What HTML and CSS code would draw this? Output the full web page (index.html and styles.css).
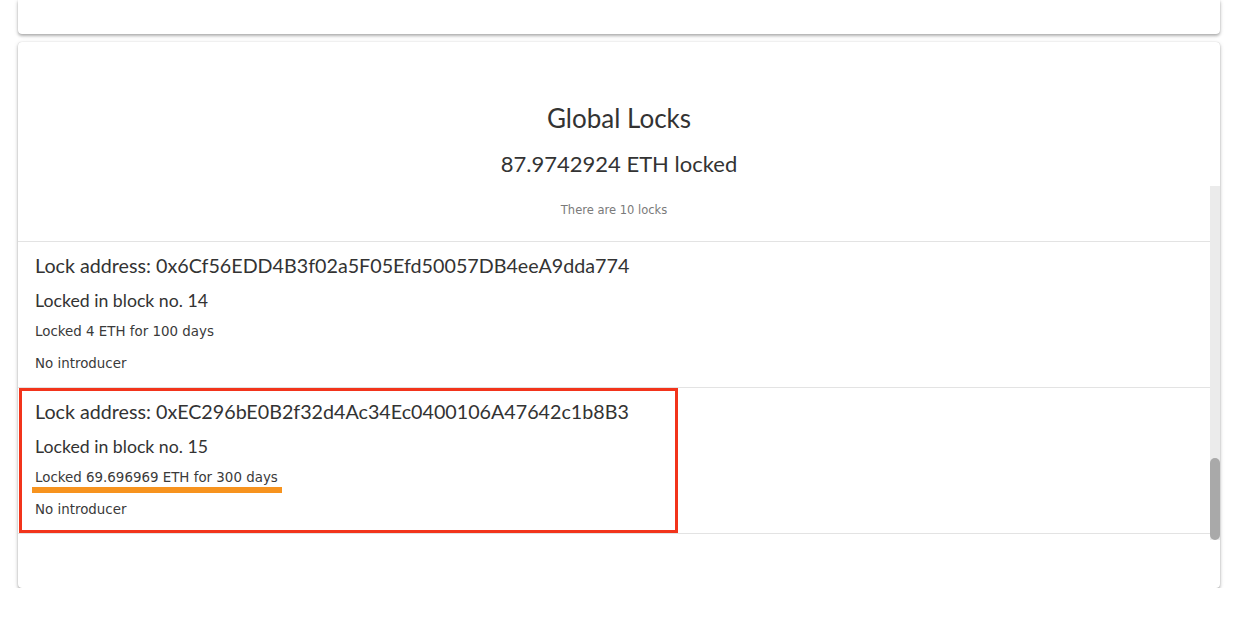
FILE: index.html
```html
<!DOCTYPE html>
<html>
<head>
<meta charset="utf-8">
<title>Global Locks</title>
<link rel="stylesheet" href="styles.css">
</head>
<body>
  <div class="page">
    <div class="card card-top"></div>
    <div class="card card-main">
      <header class="header">
        <h2 class="title">Global Locks</h2>
        <p class="total">87.9742924 ETH locked</p>
      </header>
      <div class="scroll-area">
        <div class="scroll-content">
          <p class="count">There are 10 locks</p>
          <ul class="locks">
            <li class="lock">
              <p class="lock-address">Lock address: 0x6Cf56EDD4B3f02a5F05Efd50057DB4eeA9dda774</p>
              <p class="lock-block">Locked in block no. 14</p>
              <p class="lock-amount">Locked 4 ETH for 100 days</p>
              <p class="lock-intro">No introducer</p>
            </li>
            <li class="lock lock-highlight">
              <p class="lock-address">Lock address: 0xEC296bE0B2f32d4Ac34Ec0400106A47642c1b8B3</p>
              <p class="lock-block">Locked in block no. 15</p>
              <p class="lock-amount">Locked 69.696969 ETH for 300 days</p>
              <p class="lock-intro">No introducer</p>
              <span class="mark-box"></span>
              <span class="mark-underline"></span>
            </li>
          </ul>
        </div>
        <div class="scrollbar"><div class="thumb"></div></div>
      </div>
    </div>
  </div>
</body>
</html>
```

FILE: styles.css
```css
html, body {
  margin: 0;
  padding: 0;
  background: #ffffff;
}

.page {
  padding: 0 22px 0 18px;
  display: flex;
  flex-direction: column;
  gap: 8px;
}

.card {
  background: #ffffff;
  border-radius: 4px;
  box-shadow: 0 2px 3px rgba(0,0,0,0.24), 0 1px 5px rgba(0,0,0,0.12), 0 0 1px rgba(0,0,0,0.2);
}

.card-top {
  height: 34px;
  border-radius: 0 0 4px 4px;
}

.card-main {
  height: 546px;
  box-sizing: border-box;
  padding-top: 60px;
  display: flex;
  flex-direction: column;
}

.header {
  text-align: center;
  font-family: Lato, "Open Sans", sans-serif;
  color: #333333;
}

.title {
  margin: 0;
  font-size: 26px;
  line-height: 32px;
  font-weight: 400;
}

.total {
  margin: 14px 0 0;
  font-size: 22px;
  line-height: 32px;
}

.scroll-area {
  margin-top: 6px;
  height: 354px;
  display: flex;
}

.scroll-content {
  flex: 1;
  padding-top: 16px;
}

.count {
  margin: 0 0 23px;
  text-align: center;
  font-family: "DejaVu Sans", Verdana, sans-serif;
  font-size: 11.5px;
  line-height: 16px;
  color: #7a7a7a;
}

.locks {
  list-style: none;
  margin: 0;
  padding: 0;
  border-bottom: 1px solid #e3e3e3;
}

.lock {
  position: relative;
  border-top: 1px solid #e3e3e3;
  padding: 12px 17px 15px;
  color: #333333;
}

.lock p {
  margin: 0;
}

.lock-address {
  font-family: Lato, "Open Sans", sans-serif;
  font-size: 19.7px;
  line-height: 24px;
}

.lock-block {
  margin-top: 11px !important;
  font-family: Lato, "Open Sans", sans-serif;
  font-size: 17.7px;
  line-height: 24px;
}

.lock-amount,
.lock-intro {
  font-family: "DejaVu Sans", Verdana, sans-serif;
  font-size: 13.4px;
  line-height: 16px;
  color: #3a3a3a;
}

.lock-amount {
  margin-top: 11px !important;
}

.lock-intro {
  margin-top: 16px !important;
}

.mark-box {
  position: absolute;
  left: 1px;
  top: 0;
  width: 659px;
  height: 145px;
  box-sizing: border-box;
  border: 3px solid #f2341b;
}

.mark-underline {
  position: absolute;
  left: 14px;
  top: 99px;
  width: 250px;
  height: 6px;
  background: #f7931e;
}

.scrollbar {
  width: 10px;
  background: #ebebeb;
  display: flex;
  flex-direction: column;
  justify-content: flex-end;
}

.thumb {
  height: 82px;
  background: #a9a9a9;
  border-radius: 5px;
}
```
